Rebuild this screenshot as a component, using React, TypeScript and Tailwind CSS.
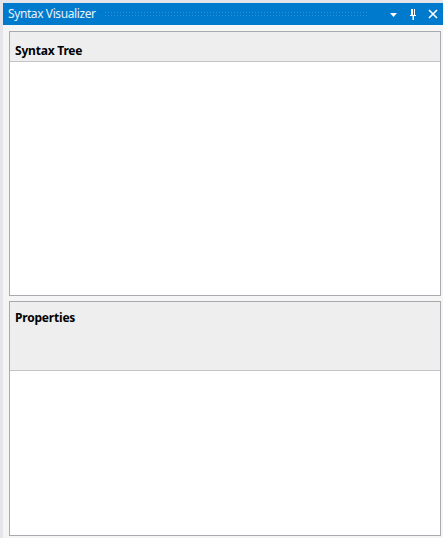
import React from 'react';

const font = { fontFamily: '"Noto Sans", "Open Sans", sans-serif' };

const Panel: React.FC<{ title: string; headerHeight: string; pad: string; className?: string }> = ({ title, headerHeight, pad, className }) => (
  <div className={`flex flex-col border border-[#a9a9b0] bg-white ${className ?? ''}`}>
    <div className={`${headerHeight} ${pad} bg-[#eeeeee] border-b border-[#c4c4c8] px-[5px]`}>
      <span className="text-[12px] font-bold text-black leading-[16px] tracking-[-0.2px]">{title}</span>
    </div>
    <div className="flex-1 bg-white" />
  </div>
);

const App: React.FC = () => {
  return (
    <div className="w-[443px] h-[538px] bg-[#e4e4ea] pt-[3px] pl-[3px] flex flex-col overflow-hidden" style={font}>
      {/* title bar */}
      <div className="h-[22px] bg-[#007acc] flex items-center pl-[5px] pr-[5px] shrink-0">
        <span className="text-[12px] text-[#e8f2fb] leading-none whitespace-nowrap tracking-[-0.4px]">Syntax Visualizer</span>
        <div className="flex-1 h-[7px] ml-[8px] mr-[20px] bg-[radial-gradient(#2f8fd8_0.7px,transparent_1px)] bg-[length:3px_3px]" />
        <div className="flex items-center gap-[11px]">
          <svg width="9" height="9" viewBox="0 0 9 9">
            <path d="M1 3 L8 3 L4.5 7 Z" fill="#ffffff" />
          </svg>
          <svg width="8" height="12" viewBox="0 0 8 12">
            <path d="M2 1 H6 V7 H7 V8 H1 V7 H2 Z" fill="#ffffff" />
            <rect x="4" y="1" width="1" height="6" fill="#007acc" />
            <rect x="3.5" y="8" width="1.5" height="4" fill="#ffffff" />
          </svg>
          <svg width="10" height="10" viewBox="0 0 10 10">
            <path d="M1 1 L9 9 M9 1 L1 9" stroke="#ffffff" strokeWidth="1.6" />
          </svg>
        </div>
      </div>
      {/* body */}
      <div className="flex-1 bg-[#f5f5f5] pl-[6px] pr-[2px] pt-[6px] pb-[2px] flex flex-col gap-[5px]">
        <Panel title="Syntax Tree" headerHeight="h-[30px]" pad="pt-[5px]" className="h-[265px]" />
        <Panel title="Properties" headerHeight="h-[69px]" pad="pt-[2px]" className="flex-1" />
      </div>
    </div>
  );
};

export default App;
